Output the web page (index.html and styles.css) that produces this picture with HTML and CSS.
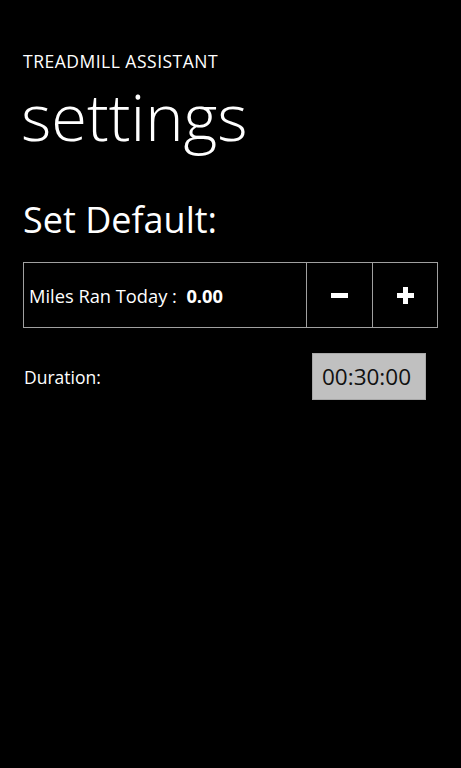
FILE: index.html
```html
<!DOCTYPE html>
<html>
<head>
<meta charset="utf-8">
<link rel="stylesheet" href="styles.css">
</head>
<body>
<div class="page">
  <div class="app-title">TREADMILL ASSISTANT</div>
  <div class="page-title">settings</div>
  <div class="section-title">Set Default:</div>
  <div class="miles-box">
    <div class="miles-label">Miles Ran Today :&nbsp;&nbsp;<span class="miles-value">0.00</span></div>
    <div class="step-btn"><span class="minus"></span></div>
    <div class="step-btn"><span class="plus"></span></div>
  </div>
  <div class="duration-row">
    <div class="duration-label">Duration:</div>
    <div class="duration-box">00:30:00</div>
  </div>
</div>
</body>
</html>
```
FILE: styles.css
```css
html, body {
  margin: 0;
  padding: 0;
  background: #000;
}
body {
  width: 461px;
  height: 768px;
  overflow: hidden;
  font-family: "Open Sans", "Noto Sans", sans-serif;
  color: #fff;
}
.page {
  padding: 50px 24px 0 23px;
}
.app-title {
  font-size: 17.5px;
  line-height: 22px;
  letter-spacing: 0.5px;
}
.page-title {
  font-size: 65px;
  font-weight: 300;
  line-height: 72px;
  margin-top: 8px;
  margin-left: -2px;
}
.section-title {
  font-size: 36px;
  line-height: 44px;
  margin-top: 46px;
}
.miles-box {
  margin-top: 20px;
  width: 415px;
  height: 66px;
  box-sizing: border-box;
  border: 1px solid #a0a0a0;
  display: flex;
}
.miles-label {
  flex: 1;
  display: flex;
  align-items: center;
  padding-left: 5px;
  font-size: 18.3px;
  border-right: 1px solid #a0a0a0;
}
.miles-value {
  font-weight: 700;
}
.step-btn {
  width: 65px;
  display: flex;
  align-items: center;
  justify-content: center;
}
.step-btn + .step-btn {
  width: 64px;
  border-left: 1px solid #a0a0a0;
}
.minus {
  width: 17px;
  height: 5px;
  background: #fff;
}
.plus {
  width: 17px;
  height: 17px;
  background:
    linear-gradient(#fff, #fff) center / 17px 5px no-repeat,
    linear-gradient(#fff, #fff) center / 5px 17px no-repeat;
}
.duration-row {
  display: flex;
  align-items: center;
  justify-content: space-between;
  margin-top: 25px;
  width: 403px;
}
.duration-label {
  font-size: 17.5px;
  margin-top: 1px;
  margin-left: 1px;
}
.duration-box {
  width: 114px;
  height: 47px;
  box-sizing: border-box;
  background: #c0c0c0;
  border: 1px solid #a8a8a8;
  color: #111;
  font-size: 22.5px;
  display: flex;
  align-items: center;
  padding-left: 9px;
}
```
